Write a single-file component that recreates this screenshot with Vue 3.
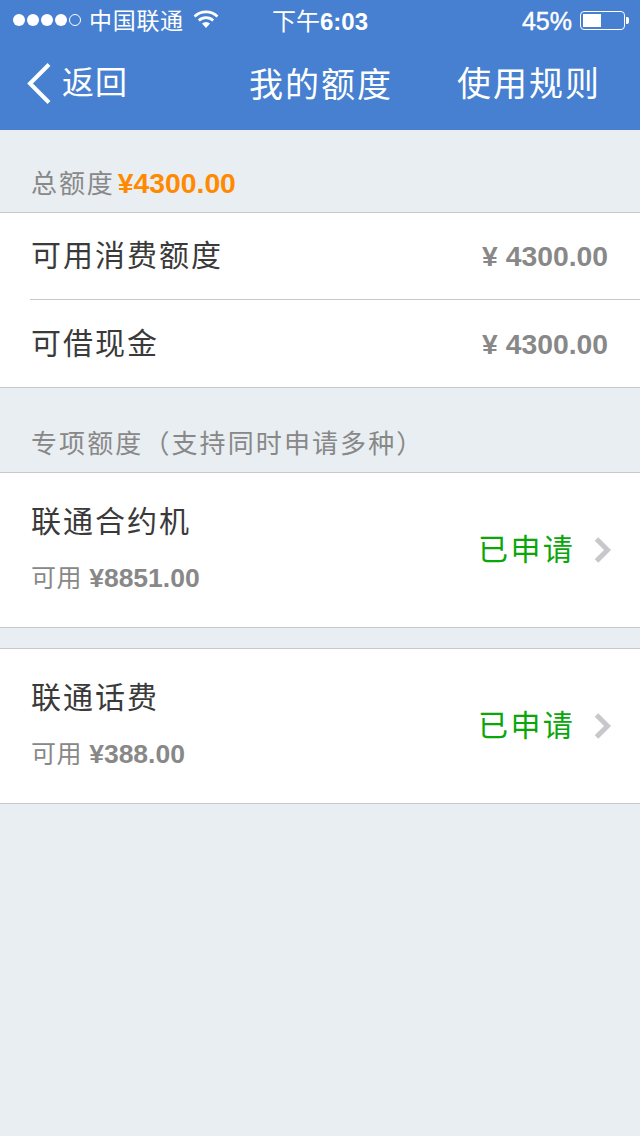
<template>
  <div class="page">
    <header class="top">
      <div class="status">
        <div class="status-left">
          <div class="dots">
            <i v-for="n in 4" :key="n" class="dot" />
            <i class="dot empty" />
          </div>
          <span class="carrier">中国联通</span>
          <svg class="wifi" viewBox="0 0 26 20" width="26" height="20">
            <path d="M1.5 7.5a16.5 16.5 0 0 1 23 0" fill="none" stroke="#fff" stroke-width="2.6" />
            <path d="M5.8 11.5a10.4 10.4 0 0 1 14.4 0" fill="none" stroke="#fff" stroke-width="2.6" />
            <path d="M9 14.5a6 6 0 0 1 8 0L13 19z" fill="#fff" />
          </svg>
        </div>
        <div class="clock">下午<b>6:03</b></div>
        <div class="status-right">
          <span class="percent">45%</span>
          <div class="battery"><div class="battery-fill" /></div>
          <div class="battery-tip" />
        </div>
      </div>
      <nav class="nav">
        <div class="back">
          <svg viewBox="0 0 26 44" width="26" height="44">
            <polyline points="23,2.5 4,21.5 23,40.5" fill="none" stroke="#fff" stroke-width="4" />
          </svg>
          <span>返回</span>
        </div>
        <div class="title">我的额度</div>
        <div class="rule">使用规则</div>
      </nav>
    </header>

    <div class="total">总额度 <em>¥4300.00</em></div>
    <section class="list">
      <div class="line">
        <span class="name">可用消费额度</span>
        <span class="amount">¥ 4300.00</span>
      </div>
      <div class="line">
        <span class="name">可借现金</span>
        <span class="amount">¥ 4300.00</span>
      </div>
    </section>

    <div class="sub-head">专项额度（支持同时申请多种）</div>
    <section v-for="item in special" :key="item.name" class="card">
      <div class="card-text">
        <div class="name">{{ item.name }}</div>
        <div class="avail">可用 <b>{{ item.avail }}</b></div>
      </div>
      <span class="state">已申请</span>
      <svg class="chev" viewBox="0 0 18 26" width="18" height="26">
        <polyline points="2.5,2 13.5,13 2.5,24" fill="none" stroke="#c8c8cc" stroke-width="5" />
      </svg>
    </section>
  </div>
</template>

<script setup>
const special = [
  { name: '联通合约机', avail: '¥8851.00' },
  { name: '联通话费', avail: '¥388.00' },
]
</script>

<style>
body {
  background: #e9eef2;
}
</style>

<style scoped>
.page {
  width: 640px;
  height: 1136px;
  overflow: hidden;
  background: #e9eef2;
  font-family: "Liberation Sans", "Noto Sans CJK SC", sans-serif;
}

.top {
  height: 130px;
  background: #4780d0;
  color: #fff;
}

.status {
  height: 40px;
  position: relative;
  display: flex;
  align-items: center;
  justify-content: space-between;
  padding: 0 11px 0 13px;
  font-size: 23px;
}

.status-left,
.status-right,
.dots {
  display: flex;
  align-items: center;
}

.dots {
  gap: 2px;
  margin-right: 10px;
}

.dot {
  width: 12px;
  height: 12px;
  border-radius: 50%;
  background: #fff;
}

.dot.empty {
  background: none;
  border: 1px solid #fff;
  box-sizing: border-box;
}

.carrier {
  letter-spacing: 0.7px;
  margin-left: -2px;
  margin-bottom: 3px;
}

.wifi {
  margin-left: 9px;
  margin-bottom: 3px;
}

.clock {
  position: absolute;
  left: 272px;
  top: 6px;
  line-height: 32px;
  font-size: 24px;
}

.clock b {
  font-weight: 700;
}

.percent {
  margin-right: 8px;
  font-size: 25px;
  font-weight: 400;
  -webkit-text-stroke: 0.4px #fff;
  position: relative;
  top: 1px;
}

.battery {
  width: 45px;
  height: 19px;
  box-sizing: border-box;
  border: 1px solid #fff;
  border-radius: 4px;
  padding: 2px;
}

.battery-fill {
  width: 18px;
  height: 13px;
  background: #fff;
}

.battery-tip {
  width: 3px;
  height: 7px;
  margin-left: 1px;
  background: #fff;
  border-radius: 0 2px 2px 0;
}

.nav {
  height: 90px;
  position: relative;
  display: flex;
  align-items: center;
  justify-content: space-between;
  padding: 0 39px 6px 24px;
  box-sizing: border-box;
  font-size: 32px;
  letter-spacing: 1px;
}

.back {
  display: flex;
  align-items: center;
  gap: 10px;
}

.back svg {
  margin: 4px 0 0 2px;
}

.back span {
  margin-bottom: 4px;
}

.title {
  position: absolute;
  left: 249px;
  top: 20px;
  line-height: 50px;
  font-size: 34px;
  letter-spacing: 2px;
}

.rule {
  font-size: 34px;
  letter-spacing: 2px;
  margin-bottom: 2px;
}

.total {
  height: 82px;
  box-sizing: border-box;
  padding: 33px 0 0 31px;
  line-height: 40px;
  font-size: 26px;
  letter-spacing: 1.9px;
  color: #888;
}

.total em {
  font-style: normal;
  font-weight: 700;
  font-size: 28.3px;
  letter-spacing: 0;
  color: #ff8a00;
  margin-left: -6px;
}

.list {
  background: #fff;
  border-top: 1px solid #c8c8cc;
  border-bottom: 1px solid #c8c8cc;
}

.line {
  height: 86px;
  margin-left: 30px;
  padding-right: 32px;
  display: flex;
  align-items: center;
  justify-content: space-between;
}

.line + .line {
  box-sizing: border-box;
  height: 88px;
  border-top: 1px solid #c8c8cc;
}

.line + .line .amount {
  margin-top: 2px;
}

.line .name {
  margin: 0 0 6px 1px;
}

.name {
  font-size: 30px;
  letter-spacing: 2px;
  color: #3a3a3a;
}

.amount {
  font-size: 28.3px;
  font-weight: 700;
  color: #888;
}

.sub-head {
  height: 84px;
  box-sizing: border-box;
  padding: 36px 0 0 31px;
  line-height: 40px;
  font-size: 26px;
  letter-spacing: 2.1px;
  color: #888;
}

.card {
  height: 156px;
  box-sizing: border-box;
  background: #fff;
  border-top: 1px solid #c8c8cc;
  border-bottom: 1px solid #c8c8cc;
  display: flex;
  align-items: center;
  padding: 0 28px 0 31px;
}

.card + .card {
  margin-top: 20px;
}

.card-text {
  flex: 1;
  margin-bottom: 10px;
}

.avail {
  margin-top: 17px;
  font-size: 25px;
  letter-spacing: 0.4px;
  color: #888;
}

.avail b {
  font-size: 26.5px;
  letter-spacing: 0;
}

.state {
  font-size: 30px;
  letter-spacing: 2.3px;
  color: #0aa60a;
  margin: 0 19px 6px 0;
}
</style>
